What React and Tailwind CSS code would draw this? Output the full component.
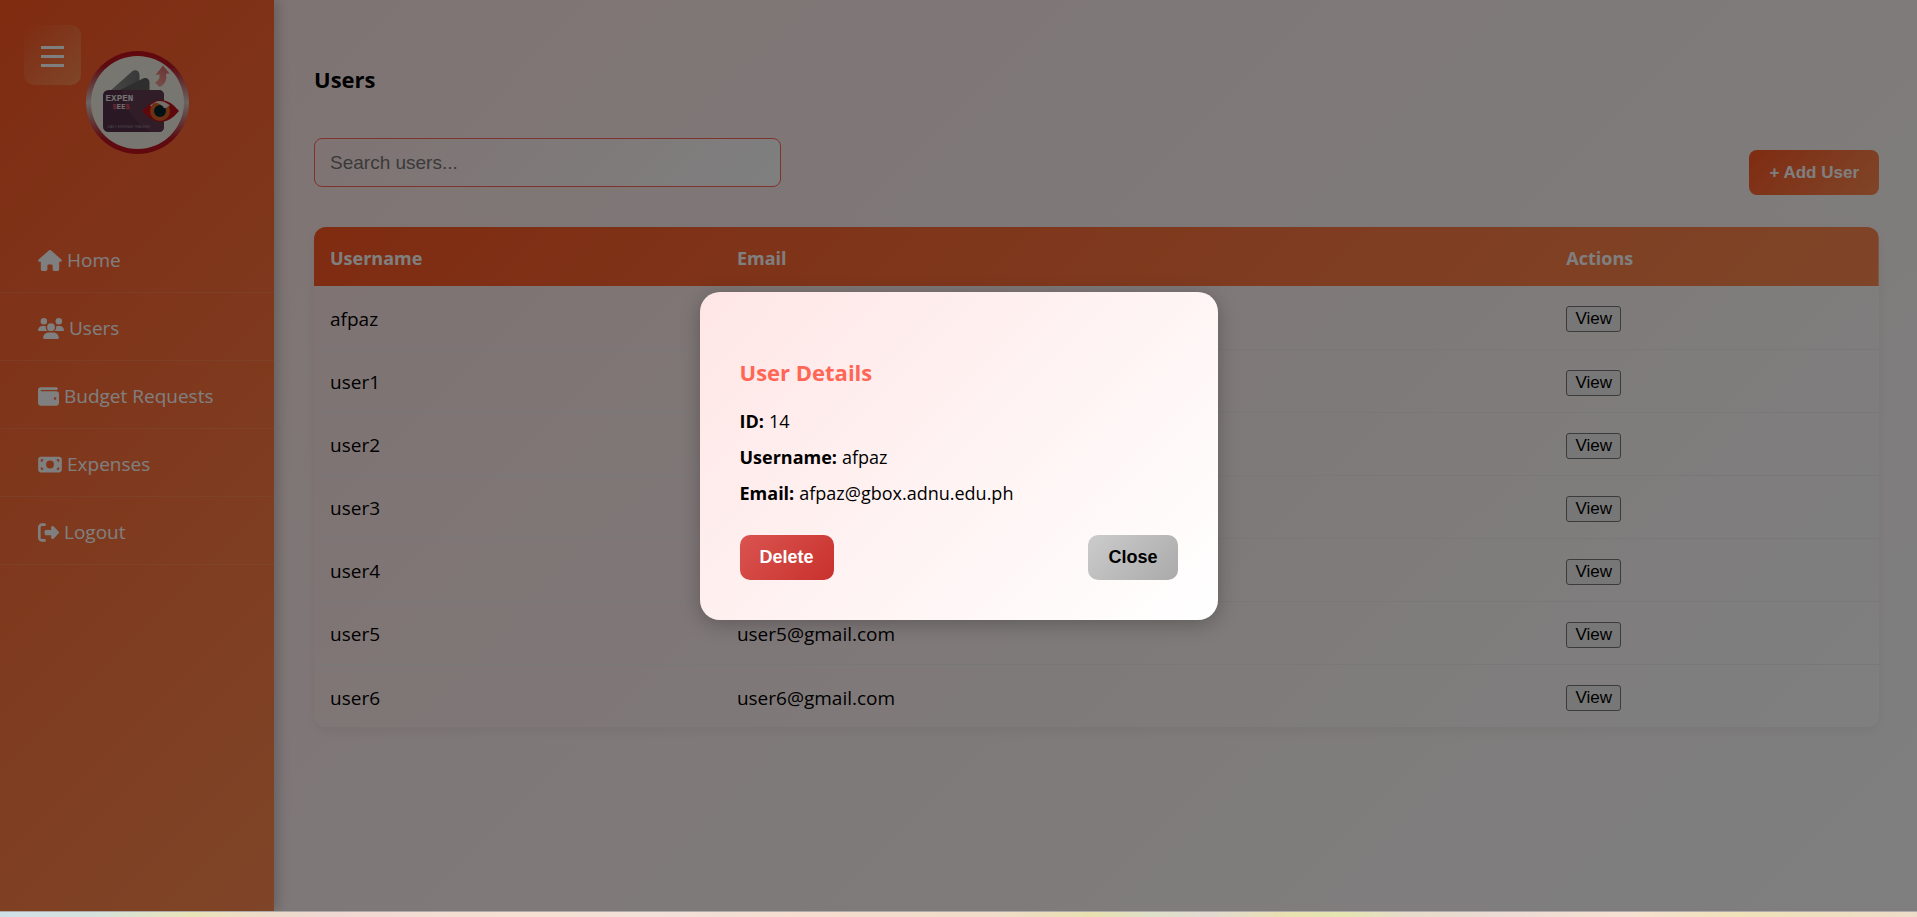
import { useState } from "react";
import { FaHouse, FaUsers, FaWallet, FaMoneyBill, FaRightFromBracket } from "react-icons/fa6";

const NAV = [
  { label: "Home", Icon: FaHouse, width: "w-6" },
  { label: "Users", Icon: FaUsers, width: "w-[26px]" },
  { label: "Budget Requests", Icon: FaWallet, width: "w-[21px]" },
  { label: "Expenses", Icon: FaMoneyBill, width: "w-6" },
  { label: "Logout", Icon: FaRightFromBracket, width: "w-[21px]" },
];

const USERS = [
  { id: 14, username: "afpaz", email: "afpaz@gbox.adnu.edu.ph" },
  { id: 15, username: "user1", email: "user1@gmail.com" },
  { id: 16, username: "user2", email: "user2@gmail.com" },
  { id: 17, username: "user3", email: "user3@gmail.com" },
  { id: 18, username: "user4", email: "user4@gmail.com" },
  { id: 19, username: "user5", email: "user5@gmail.com" },
  { id: 20, username: "user6", email: "user6@gmail.com" },
];

function Logo() {
  return (
    <svg viewBox="0 0 103 103" className="size-[103px]" role="img" aria-label="ExpenSees, daily expense tracker">
      <defs>
        <linearGradient id="ring" x1="0" y1="0" x2="0" y2="1">
          <stop offset="0" stopColor="#c4101c" />
          <stop offset="0.15" stopColor="#b81824" />
          <stop offset="0.5" stopColor="#d8c8c4" />
          <stop offset="0.85" stopColor="#b81824" />
          <stop offset="1" stopColor="#c4101c" />
        </linearGradient>
        <linearGradient id="card" x1="0" y1="0" x2="1" y2="0">
          <stop offset="0" stopColor="#8c8c8c" />
          <stop offset="1" stopColor="#707070" />
        </linearGradient>
        <linearGradient id="arrow" x1="0" y1="1" x2="0.4" y2="0">
          <stop offset="0" stopColor="#f0a096" />
          <stop offset="1" stopColor="#d8706a" />
        </linearGradient>
      </defs>
      <circle cx="51.5" cy="51.5" r="51.5" fill="url(#ring)" />
      <circle cx="51.5" cy="51.5" r="46.5" fill="#efede0" />
      <path d="M24 40 L46 20.500 C49 17.800 53.500 19.500 53.500 24 V40 Z" fill="url(#card)" />
      <path d="M30 41 L57 27.500 C60.500 26 63.500 28 63.500 31.500 V41 Z" fill="#5c5c5c" />
      <rect x="17" y="39" width="61" height="42" rx="5.500" fill="#543048" />
      <path d="M36 39 H72.500 Q78 39 78 44.500 V75.500 Q78 81 72.500 81 H66 Q40 68 36 39 Z" fill="#603a50" />
      <path d="M69 31.500 Q74.500 29 73.500 23.500 L69.500 24 L77 14.500 L83.500 22.500 L80 22.800 Q82 32 73.500 36 Z" fill="url(#arrow)" />
      <text x="19.500" y="50" fontFamily="Liberation Mono, monospace" fontWeight="700" fontSize="9.300" fill="#e8e4e4">EXPEN</text>
      <text x="26.500" y="58" fontFamily="Liberation Mono, monospace" fontWeight="700" fontSize="7.200" fill="#e8e4e4">
        <tspan fill="#e8506c">$</tspan>EE<tspan fill="#e8506c">$</tspan>
      </text>
      <text x="21.500" y="77" fontFamily="Liberation Sans, sans-serif" fontSize="3.300" fill="#a08c9c">DAILY EXPENSE TRACKER</text>
      <path d="M56 60 Q66 49 75 49 Q84 49 93 60 Q84 71 75 71 Q66 71 56 60 Z" fill="#bc1018" />
      <path d="M64 54.500 Q74 46 84 54.500 L80 58 H68 Z" fill="#e8dcd8" />
      <circle cx="74" cy="60" r="10" fill="#dc6024" />
      <circle cx="74" cy="60" r="6" fill="#02242a" />
      <path d="M68 51.500 Q75 47.500 82.500 53.500 Q82 57.500 78 57 Q75 52 68 51.500 Z" fill="#e8dcd8" />
    </svg>
  );
}

function Sidebar() {
  return (
    <aside className="relative w-[274px] shrink-0 bg-linear-135 from-[#ff5722] to-[#ff8a50] pt-[51px] shadow-[4px_0_12px_rgba(0,0,0,0.2)]">
      <button
        type="button"
        aria-label="Toggle menu"
        className="absolute top-[25px] left-6 flex h-[60px] w-[57px] items-center justify-center rounded-[10px] bg-linear-135 from-[#ff5722] to-[#ff8a50] pt-[3px]"
      >
        <svg viewBox="0 0 23 21" className="h-[21px] w-[23px] fill-white" aria-hidden="true">
          <path d="M0 0h23v3H0zM0 9h23v3H0zM0 18h23v3H0z" />
        </svg>
      </button>
      <div className="flex justify-center">
        <Logo />
      </div>
      <nav className="mt-[71px]">
        <ul>
          {NAV.map(({ label, Icon, width }) => (
            <li key={label} className="border-b border-white/10">
              <a href="#" className="flex h-[67px] items-center gap-[5px] pt-[3px] pl-[38px] text-[19px] text-white">
                <Icon className={"h-[21px] shrink-0 " + width} />
                <span>{label}</span>
              </a>
            </li>
          ))}
        </ul>
      </nav>
    </aside>
  );
}

function UsersTable({ onView }) {
  return (
    <div className="mt-8 overflow-hidden rounded-xl bg-linear-135 from-[#ffe6e6] to-white shadow-[0_4px_12px_rgba(0,0,0,0.06)]">
      <table className="w-full table-fixed border-collapse text-left">
        <thead className="bg-linear-135 from-[#ff5722] to-[#ff8a50] text-[18px] text-white">
          <tr className="h-[59px]">
            <th className="w-[26%] px-4 pt-[3px] font-bold">Username</th>
            <th className="w-[53%] px-4 pt-[3px] font-bold">Email</th>
            <th className="px-4 pt-[3px] font-bold">Actions</th>
          </tr>
        </thead>
        <tbody className="text-[19px] text-black">
          {USERS.map((user) => (
            <tr key={user.id} className="h-[63px] border-b border-[#f0f0f0] last:border-b-0">
              <td className="px-4 pt-1">{user.username}</td>
              <td className="px-4 pt-1">{user.email}</td>
              <td className="px-4 pt-1">
                <button
                  type="button"
                  onClick={() => onView(user)}
                  className="block h-[26px] w-[55px] rounded-[3px] border border-[#767676] bg-[#efefef] font-['Liberation_Sans',Arial,sans-serif] text-[17px] leading-6"
                >
                  View
                </button>
              </td>
            </tr>
          ))}
        </tbody>
      </table>
    </div>
  );
}

function UserDialog({ user, onClose }) {
  const button = "h-[45px] rounded-[10px] px-5 font-['Liberation_Sans',Arial,sans-serif] text-[18px] font-bold";
  return (
    <div className="absolute inset-0 flex items-center justify-center bg-black/50">
      <div
        role="dialog"
        aria-modal="true"
        aria-labelledby="details-title"
        className="w-[518px] max-w-full rounded-[20px] bg-linear-135 from-[#ffe6e6] to-white px-10 pt-[62px] pb-10 text-[18px] text-black shadow-[0_4px_20px_rgba(0,0,0,0.25)]"
      >
        <h2 id="details-title" className="text-[22px] leading-9 font-bold text-[#ff6655]">User Details</h2>
        <dl className="mt-[13px] leading-9">
          <div className="flex gap-[5px]">
            <dt className="font-bold">ID:</dt>
            <dd>{user.id}</dd>
          </div>
          <div className="flex gap-[5px]">
            <dt className="font-bold">Username:</dt>
            <dd>{user.username}</dd>
          </div>
          <div className="flex gap-[5px]">
            <dt className="font-bold">Email:</dt>
            <dd>{user.email}</dd>
          </div>
        </dl>
        <div className="mt-6 flex justify-between">
          <button type="button" className={button + " bg-linear-135 from-[#d9534f] to-[#c9302c] text-white"}>Delete</button>
          <button type="button" onClick={onClose} className={button + " bg-linear-135 from-[#cccccc] to-[#aaaaaa] text-black"}>Close</button>
        </div>
      </div>
    </div>
  );
}

export default function App() {
  const [selected, setSelected] = useState(USERS[0]);

  return (
    <div className="flex min-h-screen flex-col font-['Open_Sans','Noto_Sans',sans-serif]">
      <div className="relative flex flex-1 overflow-hidden bg-linear-135 from-[#ffe6e6] to-white">
        <Sidebar />
        <main className="min-w-0 flex-1 pt-[63px] pr-[38px] pl-10">
          <h1 className="text-[22px] leading-8 font-bold text-black">Users</h1>
          <div className="mt-[43px] flex items-end justify-between">
            <input
              type="search"
              aria-label="Search users"
              placeholder="Search users..."
              className="mb-2 h-[49px] w-[467px] rounded-lg border border-[#ff6659] bg-linear-135 from-[#ffe6e6] to-white px-[15px] font-['Liberation_Sans',Arial,sans-serif] text-[19px] placeholder:text-[#757575]"
            />
            <button
              type="button"
              className="h-[45px] rounded-lg bg-linear-135 from-[#ff5722] to-[#ff8a50] px-5 font-['Liberation_Sans',Arial,sans-serif] text-[17px] font-bold text-white"
            >
              + Add User
            </button>
          </div>
          <UsersTable onView={setSelected} />
        </main>
        {selected && <UserDialog user={selected} onClose={() => setSelected(null)} />}
      </div>
      <div className="h-[6px] border-t border-[#b0aaa8] bg-[linear-gradient(90deg,#cfe0e8_0%,#d5e2dc_5%,#e8e4b8_10%,#eddcc8_13%,#f0d8d2_17%,#f6e0d2_27%,#f2e0d8_35%,#f5dcce_42%,#f0dcc8_52%,#e8e0b0_57%,#dde0c8_60%,#e2dad2_63%,#e8e0b0_67%,#e4e6b0_70%,#e6dcc8_73%,#ecdad4_78%,#f6e0d0_85%,#efe2b8_91%,#eedcc8_100%)]" />
    </div>
  );
}
